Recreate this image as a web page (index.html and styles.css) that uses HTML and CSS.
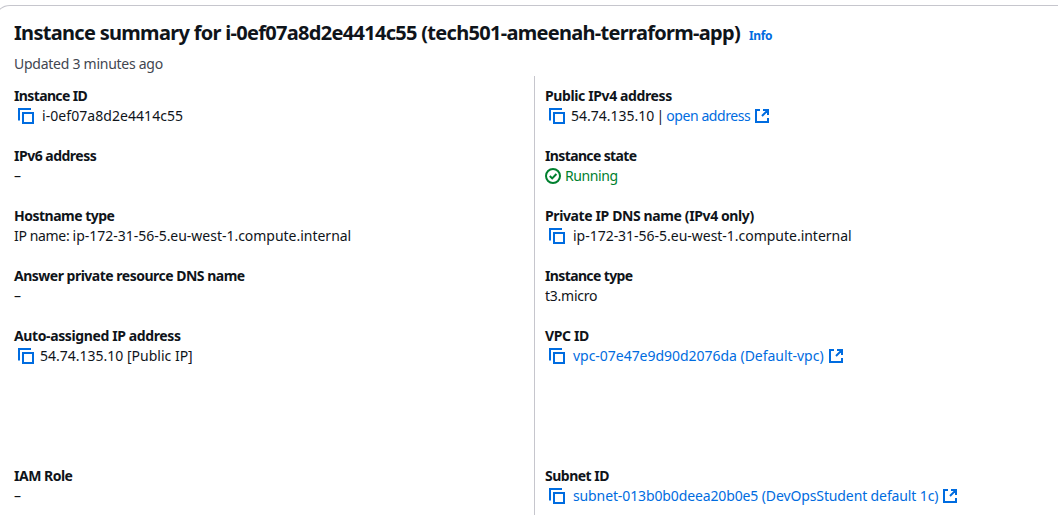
FILE: index.html
```
<!DOCTYPE html>
<html lang="en">
<head>
<meta charset="utf-8">
<title>Instance summary</title>
<link rel="stylesheet" href="styles.css">
</head>
<body>
<svg class="symbols" aria-hidden="true">
  <symbol id="copy" viewBox="0 0 16 16"><path d="M1 12.5V1h12M5 5h10v10H5z"/></symbol>
  <symbol id="external" viewBox="0 0 16 16"><path d="M6 2H2v12h12v-4M9 2h5v5M8 8l5.6-5.6"/></symbol>
  <symbol id="check" viewBox="0 0 16 16"><circle cx="8" cy="8" r="7"/><path d="M4.8 8l2.4 2.4 4.2-4.4"/></symbol>
</svg>
<main class="panel">
  <header class="header">
    <h1 class="title">Instance summary for i-0ef07a8d2e4414c55 (tech501-ameenah-terraform-app)</h1>
    <a class="info">Info</a>
  </header>
  <p class="updated">Updated 3 minutes ago</p>
  <div class="columns">
    <section class="column">
      <div class="field">
        <h2 class="label snug">Instance ID</h2>
        <div class="value copyable"><svg class="icon"><use href="#copy"/></svg><span class="gap-wide instance">i-0ef07a8d2e4414c55</span></div>
      </div>
      <div class="field">
        <h2 class="label">IPv6 address</h2>
        <div class="value">–</div>
      </div>
      <div class="field">
        <h2 class="label">Hostname type</h2>
        <div class="value"><span class="host"><span class="prefix">IP name: </span>ip-172-31-56-5.eu-west-1.compute.internal</span></div>
      </div>
      <div class="field">
        <h2 class="label">Answer private resource DNS name</h2>
        <div class="value">–</div>
      </div>
      <div class="field tall">
        <h2 class="label loose">Auto-assigned IP address</h2>
        <div class="value copyable"><svg class="icon"><use href="#copy"/></svg><span class="gap-narrow">54.74.135.10 [Public IP]</span></div>
      </div>
      <div class="field last">
        <h2 class="label">IAM Role</h2>
        <div class="value">–</div>
      </div>
    </section>
    <section class="column second">
      <div class="field">
        <h2 class="label loose">Public IPv4 address</h2>
        <div class="value copyable"><svg class="icon"><use href="#copy"/></svg><span class="gap-narrow">54.74.135.10</span><span class="bar">|</span><a class="link address">open address</a><svg class="icon external"><use href="#external"/></svg></div>
      </div>
      <div class="field">
        <h2 class="label snug">Instance state</h2>
        <div class="value running"><svg class="icon"><use href="#check"/></svg><span class="state">Running</span></div>
      </div>
      <div class="field">
        <h2 class="label loose">Private IP DNS name (IPv4 only)</h2>
        <div class="value copyable"><svg class="icon"><use href="#copy"/></svg><span class="gap-wide dns">ip-172-31-56-5.eu-west-1.compute.internal</span></div>
      </div>
      <div class="field">
        <h2 class="label snug">Instance type</h2>
        <div class="value"><span class="type">t3.micro</span></div>
      </div>
      <div class="field tall">
        <h2 class="label loose">VPC ID</h2>
        <div class="value copyable"><svg class="icon"><use href="#copy"/></svg><a class="link gap-wide vpc">vpc-07e47e9d90d2076da (Default-vpc)</a><svg class="icon external"><use href="#external"/></svg></div>
      </div>
      <div class="field last">
        <h2 class="label">Subnet ID</h2>
        <div class="value copyable"><svg class="icon"><use href="#copy"/></svg><a class="link gap-wide subnet">subnet-013b0b0deea20b0e5 (DevOpsStudent default 1c)</a><svg class="icon external"><use href="#external"/></svg></div>
      </div>
    </section>
  </div>
</main>
</body>
</html>
```
FILE: styles.css
```
* { box-sizing: border-box; }
body {
  margin: 0;
  overflow: hidden;
  background: #fff;
  color: #0f141a;
  font: 14px/20px "Noto Sans", "Open Sans", sans-serif;
  white-space: nowrap;
}
h1, h2, p { margin: 0; }
.symbols { display: none; }
.panel {
  margin: 5px -20px 0 -6px;
  height: 510px;
  padding: 15px 20px 0 19px;
  border: 1px solid #c6c6cd;
  border-bottom: 0;
  border-radius: 16px 16px 0 0;
}
.header { display: flex; align-items: baseline; height: 24px; }
.title { font-size: 20px; line-height: 24px; font-weight: 700; letter-spacing: -0.698px; }
.info { margin-left: 9px; font-size: 12px; font-weight: 700; letter-spacing: -0.35px; color: #006ce0; }
.updated { margin-top: 9px; color: #424650; letter-spacing: -0.26px; }
.columns { display: grid; grid-template-columns: 520px 1fr; margin-top: 2px; }
.column { padding-top: 10px; }
.second { border-left: 1px solid #c6c6cd; padding-left: 10px; height: 439px; }
.field { height: 60px; }
.tall { height: 140px; }
.last { height: 49px; }
.label { font-size: 14px; line-height: 20px; font-weight: 700; letter-spacing: -0.5px; }
.loose { letter-spacing: -0.385px; }
.snug { letter-spacing: -0.63px; }
.value { display: flex; align-items: center; height: 20px; }
.copyable { padding-left: 4px; }
.icon { flex: none; width: 16px; height: 16px; fill: none; stroke: #006ce0; stroke-width: 2; }
.gap-wide { margin-left: 8px; }
.gap-narrow { margin-left: 6px; }
.bar { margin: 0 4px; width: 4px; display: flex; justify-content: center; }
.link { color: #006ce0; }
.address { letter-spacing: -0.43px; }
.external { margin-left: 4px; }
.running { color: #00802f; }
.running .icon { stroke: #00802f; }
.state { margin-left: 4px; letter-spacing: -0.42px; }
.instance { letter-spacing: 0.06px; }
.host, .dns { letter-spacing: -0.02px; }
.prefix { letter-spacing: -0.35px; }
.type { letter-spacing: -0.25px; }
.vpc { letter-spacing: -0.03px; }
.subnet { letter-spacing: -0.12px; }
```
